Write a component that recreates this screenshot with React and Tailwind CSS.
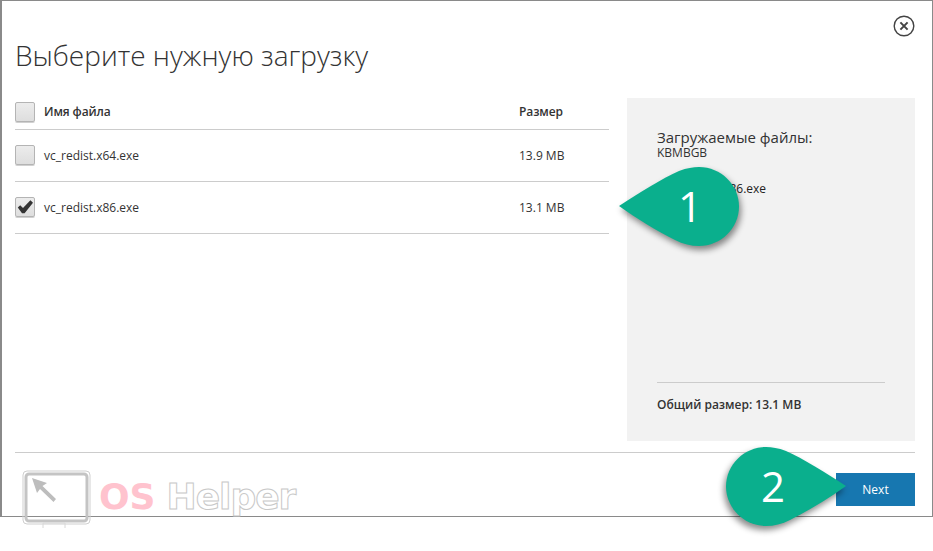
const font = { fontFamily: '"Open Sans", sans-serif' };

function Box({ checked }) {
  return (
    <div className="relative w-5 h-5 shrink-0 rounded-[2px] border border-[#b4b4b4] bg-gradient-to-b from-[#ececec] to-[#dedede] shadow-[0_1px_0_#d0d0d0]">
      {checked && (
        <svg viewBox="0 0 20 20" className="absolute -left-px -top-px w-5 h-5">
          <path d="M2.8 10.6 L5.2 8.3 L8 11 L15.4 3.2 L18 5.8 L9.6 16.2 L7 16.2 Z" fill="#333333" />
        </svg>
      )}
    </div>
  );
}

function Row({ name, size, checked }) {
  return (
    <div className="h-[52px] flex items-center border-b border-[#cccccc] pb-px text-[12px] text-[#333333]">
      <Box checked={checked} />
      <span className="ml-[9px] w-[475px] pt-[2px]">{name}</span>
      <span className="pt-[2px]">{size}</span>
    </div>
  );
}

function Bubble({ className, flip, label, textClass }) {
  return (
    <div className={"absolute w-[126px] h-[88px] " + className}>
      <svg viewBox="0 0 126 88" className={"w-full h-full overflow-visible drop-shadow-[2px_4px_3px_rgba(0,0,0,0.45)] " + (flip ? "-scale-x-100" : "")}>
        <path d="M2 43 C22 30 46 15 62 8 C70 5 76 4 82 4 C104 4 122 22 122 43.5 C122 65 104 83 82 83 C74 83 66 81 58 77 C40 68 20 56 2 43 Z" fill="#0aaf8d" />
      </svg>
      <span className={"absolute text-white text-[42px] leading-none " + textClass}>{label}</span>
    </div>
  );
}

export default function App() {
  return (
    <div className="relative w-[933px] h-[551px] bg-white overflow-hidden" style={font}>
      <div className="h-[517px] border border-[#8a8a8a] border-l-2 flex flex-col pl-[13px] pr-[17px] bg-white">
        <div className="flex justify-end pt-[14px] h-[37px]">
          <svg viewBox="0 0 22 22" className="w-[22px] h-[22px]" fill="none" stroke="#444444">
            <circle cx="11" cy="11" r="9.8" strokeWidth="1.4" />
            <path d="M7.4 7.4 L14.6 14.6 M14.6 7.4 L7.4 14.6" strokeWidth="2" />
          </svg>
        </div>
        <h1 className="text-[28px] leading-[36px] font-light text-[#333333] mt-[-1px] h-[61px]">Выберите нужную загрузку</h1>
        <div className="flex h-[343px]">
          <div className="w-[594px]">
            <div className="h-[32px] flex items-center border-b border-[#cccccc] pb-[4px] text-[12px] font-semibold text-[#333333]">
              <Box />
              <span className="ml-[9px] w-[475px] tracking-[-0.1px]">Имя файла</span>
              <span className="tracking-[-0.1px]">Размер</span>
            </div>
            <Row name="vc_redist.x64.exe" size="13.9 MB" />
            <Row name="vc_redist.x86.exe" size="13.1 MB" checked />
          </div>
          <div className="ml-[18px] w-[288px] bg-[#f2f2f2] px-[30px] pt-[29px] pb-[28px] flex flex-col text-[#333333]">
            <div className="text-[15px] leading-[20px]">Загружаемые файлы:</div>
            <div className="text-[12px] leading-[14px] mt-[-1px]">KBMBGB</div>
            <div className="text-[12px] leading-[16px] mt-[21px] ml-[14px] text-[#222222]">vc_redist.x86.exe</div>
            <div className="mt-auto border-t border-[#cccccc] pt-[14px] text-[12px] leading-[16px] font-semibold">Общий размер: 13.1 MB</div>
          </div>
        </div>
        <div className="mt-[11px] border-t border-[#cccccc] flex justify-end pt-[20px]">
          <button className="w-[79px] h-[33px] bg-[#1777b0] text-white text-[12px]">Next</button>
        </div>
      </div>

      <Bubble className="left-[617px] top-[163px]" label="1" textClass="left-[61px] top-[22px]" />
      <Bubble className="left-[722px] top-[443px]" flip label="2" textClass="left-[39px] top-[22px]" />

      <div className="absolute left-[22px] top-[470px] flex">
        <svg width="70" height="62" viewBox="0 0 70 62" fill="none">
          <rect x="1" y="1" width="67" height="53" rx="4" stroke="#cfcfcf" strokeWidth="1" />
          <rect x="4" y="4" width="61" height="47" rx="3" stroke="#c4c4c4" strokeWidth="3" />
          <path d="M21 58 V53 H43 V58" stroke="#d8d8d8" />
          <path d="M10 8 L25 13 L20.5 16 L34 29 L31.5 32 L18 19 L15 23 Z" fill="#bdbdbd" />
        </svg>
        <div className="ml-[7px] mt-[5px] text-[36px] leading-[44px] font-bold whitespace-nowrap" style={{ fontFamily: '"DejaVu Sans", sans-serif' }}>
          <span className="text-[#ffc3ce]">OS</span>
          <span className="ml-[11px] tracking-[-1px] text-white [-webkit-text-stroke:1px_#c8c8c8]">Helper</span>
        </div>
      </div>
    </div>
  );
}
